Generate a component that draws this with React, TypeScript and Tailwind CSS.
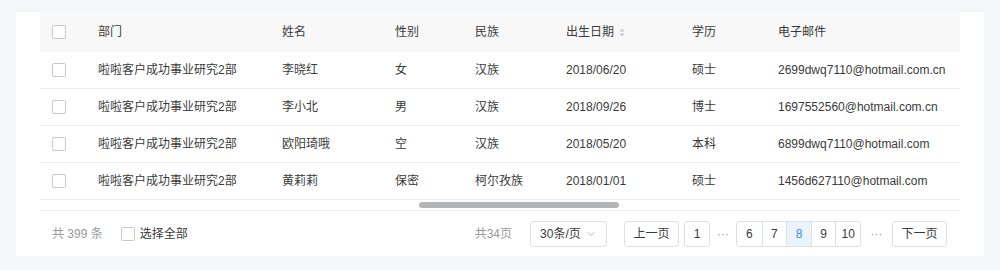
import { ChevronDown } from "lucide-react";

const columns = ["部门", "姓名", "性别", "民族", "出生日期", "学历", "电子邮件"];

const rows = [
  { id: 1, dept: "啦啦客户成功事业研究2部", name: "李晓红", gender: "女", nation: "汉族", birth: "2018/06/20", edu: "硕士", email: "2699dwq7110@hotmail.com.cn" },
  { id: 2, dept: "啦啦客户成功事业研究2部", name: "李小北", gender: "男", nation: "汉族", birth: "2018/09/26", edu: "博士", email: "1697552560@hotmail.com.cn" },
  { id: 3, dept: "啦啦客户成功事业研究2部", name: "欧阳琦哦", gender: "空", nation: "汉族", birth: "2018/05/20", edu: "本科", email: "6899dwq7110@hotmail.com" },
  { id: 4, dept: "啦啦客户成功事业研究2部", name: "黄莉莉", gender: "保密", nation: "柯尔孜族", birth: "2018/01/01", edu: "硕士", email: "1456d627110@hotmail.com" },
];

const gridCols = "grid grid-cols-[58px_184px_113px_80px_91px_126px_86px_1fr] items-center";

function Checkbox() {
  return <span className="block w-[14px] h-[14px] rounded-[2px] border border-[#c5c8ce] bg-white" />;
}

function SortIcon() {
  return (
    <svg width="6" height="9" viewBox="0 0 6 9" className="ml-[5px]">
      <path d="M3 0.5L5.5 3.5H0.5Z" fill="#c5c8ce" />
      <path d="M3 8.5L5.5 5.5H0.5Z" fill="#c5c8ce" />
    </svg>
  );
}

export default function App() {
  const pages = [6, 7, 8, 9, 10];

  return (
    <div
      className="w-[1000px] h-[270px] bg-[#f5f6f8] pt-3 px-4 text-[12px] text-[#3a3a3a]"
      style={{ fontFamily: '"Liberation Sans", "Noto Sans CJK SC", sans-serif' }}
    >
      <div className="w-[968px] h-[244px] bg-white px-6 flex flex-col">
        <div className={`${gridCols} h-[40px] bg-[#f8f8f9]`}>
          <div className="pl-3">
            <Checkbox />
          </div>
          {columns.map((col) => (
            <div key={col} className="flex items-center">
              {col}
              {col === "出生日期" && <SortIcon />}
            </div>
          ))}
        </div>

        {rows.map((r) => (
          <div key={r.id} className={`${gridCols} h-[37px] border-b border-[#ececee]`}>
            <div className="pl-3">
              <Checkbox />
            </div>
            <div>{r.dept}</div>
            <div>{r.name}</div>
            <div>{r.gender}</div>
            <div>{r.nation}</div>
            <div>{r.birth}</div>
            <div>{r.edu}</div>
            <div className="whitespace-nowrap">{r.email}</div>
          </div>
        ))}

        <div className="h-[11px] flex items-center pl-[379px] border-b border-[#ececee]">
          <div className="w-[200px] h-[6px] rounded-full bg-[#b4b5b7]" />
        </div>

        <div className="flex-1 flex items-center pl-3 pr-[13px]">
          <span className="text-[#999]">共 399 条</span>
          <label className="flex items-center ml-[18px] gap-[5px]">
            <Checkbox />
            <span>选择全部</span>
          </label>

          <span className="ml-auto text-[#999] mr-[18px]">共34页</span>
          <div className="h-[26px] w-[77px] border border-[#e0e0e3] rounded-[3px] flex items-center pl-[9px] gap-[4px]">
            <span>30条/页</span>
            <ChevronDown size={12} strokeWidth={1.5} className="text-[#999]" />
          </div>

          <button className="ml-[17px] h-[26px] w-[55px] border border-[#e0e0e3] rounded-[3px]">上一页</button>
          <button className="ml-[5px] h-[26px] w-[26px] border border-[#e0e0e3] rounded-[3px]">1</button>
          <span className="w-[26px] text-center text-[#999]">···</span>
          <div className="flex h-[26px] border border-[#e0e0e3] rounded-[3px] overflow-hidden">
            {pages.map((p, i) => (
              <span
                key={p}
                className={`w-[24.6px] flex items-center justify-center ${i > 0 ? "border-l border-[#e0e0e3]" : ""} ${
                  p === 8 ? "bg-[#eaf4fe] text-[#3b86ef]" : ""
                }`}
              >
                {p}
              </span>
            ))}
          </div>
          <span className="w-[31px] text-center text-[#999]">···</span>
          <button className="h-[26px] w-[55px] border border-[#e0e0e3] rounded-[3px]">下一页</button>
        </div>
      </div>
    </div>
  );
}
